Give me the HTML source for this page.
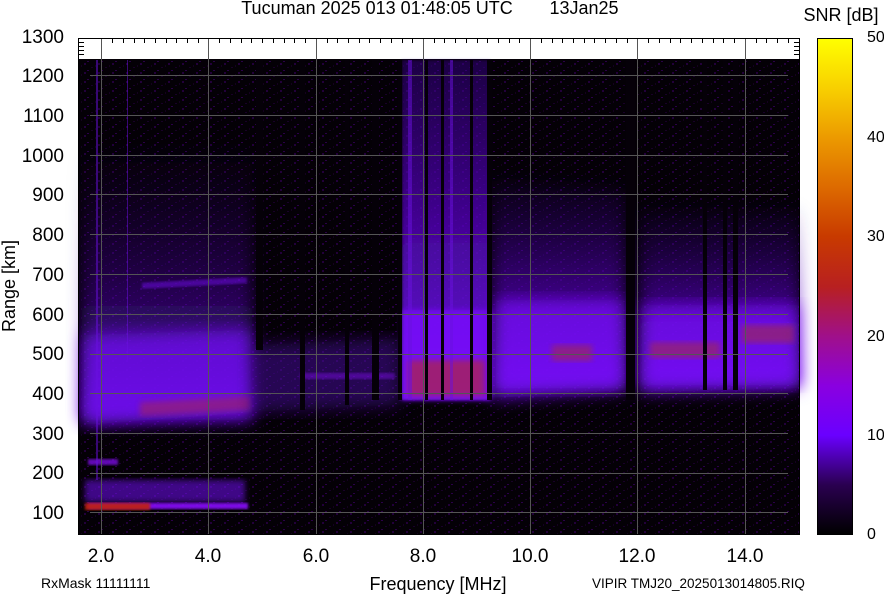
<!DOCTYPE html>
<html><head><meta charset="utf-8"><style>
html,body{margin:0;padding:0;background:#fff;width:884px;height:595px;overflow:hidden}
svg{display:block}
text{font-family:"Liberation Sans",Arial,sans-serif;fill:#000}
</style></head><body>
<svg width="884" height="595" viewBox="0 0 884 595" xmlns="http://www.w3.org/2000/svg">
<defs>
<filter id="b3"><feGaussianBlur stdDeviation="3"/></filter>
<filter id="b6"><feGaussianBlur stdDeviation="8"/></filter>
<filter id="b1"><feGaussianBlur stdDeviation="1.2"/></filter>
<linearGradient id="cb" x1="0" y1="1" x2="0" y2="0">
<stop offset="0" stop-color="#000"/>
<stop offset="0.1" stop-color="#2a0050"/>
<stop offset="0.2" stop-color="#6a00ff"/>
<stop offset="0.3" stop-color="#8a00e0"/>
<stop offset="0.4" stop-color="#a0108a"/>
<stop offset="0.5" stop-color="#b82020"/>
<stop offset="0.6" stop-color="#c83a00"/>
<stop offset="0.7" stop-color="#dd6a00"/>
<stop offset="0.8" stop-color="#ec9a00"/>
<stop offset="0.9" stop-color="#f8d000"/>
<stop offset="1" stop-color="#ffff00"/>
</linearGradient>
<linearGradient id="fog" x1="0" y1="1" x2="0" y2="0">
<stop offset="0" stop-color="#7010f0" stop-opacity="0.9"/>
<stop offset="0.35" stop-color="#5a10c8" stop-opacity="0.5"/>
<stop offset="1" stop-color="#30006a" stop-opacity="0"/>
</linearGradient>
<linearGradient id="col" x1="0" y1="1" x2="0" y2="0">
<stop offset="0" stop-color="#7010f0" stop-opacity="0.95"/>
<stop offset="0.5" stop-color="#5a08c8" stop-opacity="0.6"/>
<stop offset="1" stop-color="#3a0090" stop-opacity="0.1"/>
</linearGradient>
<linearGradient id="col2" x1="0" y1="1" x2="0" y2="0">
<stop offset="0" stop-color="#7010f0" stop-opacity="0.95"/>
<stop offset="0.5" stop-color="#5a08c8" stop-opacity="0.75"/>
<stop offset="1" stop-color="#3a0090" stop-opacity="0.45"/>
</linearGradient>
<pattern id="noise" width="14" height="9" patternUnits="userSpaceOnUse">
<rect width="14" height="9" fill="#040006"/>
<rect x="0" y="0" width="2" height="2" fill="#22003a"/>
<rect x="7" y="4" width="2" height="1" fill="#180028"/>
<rect x="3" y="7" width="2" height="1" fill="#2a0048"/>
<rect x="11" y="2" width="1" height="2" fill="#14001f"/>
</pattern>
</defs>

<text x="377" y="14" font-size="18" text-anchor="middle">Tucuman 2025 013 01:48:05 UTC</text>
<text x="584" y="14" font-size="18" text-anchor="middle">13Jan25</text>
<text x="841" y="21" font-size="18" text-anchor="middle">SNR [dB]</text>

<rect x="78" y="38" width="722" height="497" fill="#fff"/>
<rect x="78" y="59" width="722" height="476" fill="url(#noise)"/>

<g>
<rect x="82" y="140" width="170" height="280" fill="url(#fog)" filter="url(#b6)"/>
<polygon points="84,335 250,330 252,412 84,425" fill="#7010f0" opacity="0.75" filter="url(#b6)"/>
<polygon points="140,402 250,396 250,410 140,416" fill="#b02a30" opacity="0.45" filter="url(#b3)"/>
<rect x="142" y="280" width="105" height="6" fill="#7a10ff" opacity="0.45" filter="url(#b1)" transform="rotate(-3 195 283)"/>
<polygon points="252,345 400,338 400,405 252,412" fill="#4a08a0" opacity="0.5" filter="url(#b6)"/>
<rect x="300" y="373" width="95" height="6" fill="#8a10ff" opacity="0.4" filter="url(#b1)"/>
<rect x="402" y="60" width="88" height="340" fill="url(#col2)" filter="url(#b1)"/>
<rect x="402" y="310" width="90" height="90" fill="#7a10ff" opacity="0.8" filter="url(#b3)"/>
<rect x="408" y="360" width="78" height="36" fill="#b82a20" opacity="0.6" filter="url(#b3)"/>
<polygon points="492,180 625,190 625,390 492,398" fill="url(#col)" filter="url(#b6)"/>
<rect x="496" y="300" width="128" height="88" fill="#7a10ff" opacity="0.7" filter="url(#b6)"/>
<rect x="552" y="345" width="40" height="16" fill="#a02a50" opacity="0.6" filter="url(#b3)"/>
<polygon points="640,210 800,210 800,388 640,392" fill="url(#col)" filter="url(#b6)"/>
<rect x="642" y="305" width="156" height="80" fill="#7a10ff" opacity="0.7" filter="url(#b6)"/>
<rect x="650" y="342" width="70" height="16" fill="#a02a50" opacity="0.6" filter="url(#b3)"/>
<rect x="742" y="325" width="52" height="18" fill="#a02a50" opacity="0.6" filter="url(#b3)"/>
<rect x="88" y="459" width="30" height="6" fill="#8a10ff" opacity="0.7" filter="url(#b1)"/>
<rect x="85" y="480" width="160" height="22" fill="#7010f0" opacity="0.55" filter="url(#b3)"/>
<rect x="88" y="503" width="160" height="6" fill="#8a10ff" opacity="0.9" filter="url(#b1)"/>
<rect x="85" y="503" width="65" height="7" fill="#c02010" opacity="0.9" filter="url(#b1)"/>
<g fill="#050008">
<rect x="256" y="60" width="7" height="290"/>
<rect x="300" y="60" width="5" height="350"/>
<rect x="345" y="60" width="4" height="345"/>
<rect x="372" y="60" width="7" height="340"/>
<rect x="398" y="60" width="4" height="340"/>
<rect x="425" y="60" width="3" height="340"/>
<rect x="441" y="60" width="3" height="340"/>
<rect x="470" y="60" width="3" height="340"/>
<rect x="487" y="60" width="5" height="340"/>
<rect x="626" y="60" width="9" height="340"/>
<rect x="703" y="60" width="4" height="330"/>
<rect x="723" y="60" width="4" height="330"/>
<rect x="733" y="60" width="5" height="330"/>
</g>
<g fill="#6a10e0" opacity="0.5">
<rect x="96" y="60" width="2" height="420"/>
<rect x="127" y="60" width="1" height="300"/>
<rect x="408" y="60" width="4" height="340"/>
<rect x="450" y="60" width="3" height="340"/>
</g>
</g>

<g stroke="#555" stroke-width="1" fill="none">
<line x1="101.5" y1="38" x2="101.5" y2="535"/>
<line x1="208.5" y1="38" x2="208.5" y2="535"/>
<line x1="316.5" y1="38" x2="316.5" y2="535"/>
<line x1="423.5" y1="38" x2="423.5" y2="535"/>
<line x1="530.5" y1="38" x2="530.5" y2="535"/>
<line x1="637.5" y1="38" x2="637.5" y2="535"/>
<line x1="745.5" y1="38" x2="745.5" y2="535"/>
<line x1="90" y1="75.5" x2="788" y2="75.5"/>
<line x1="90" y1="115.5" x2="788" y2="115.5"/>
<line x1="90" y1="155.5" x2="788" y2="155.5"/>
<line x1="90" y1="194.5" x2="788" y2="194.5"/>
<line x1="90" y1="234.5" x2="788" y2="234.5"/>
<line x1="90" y1="274.5" x2="788" y2="274.5"/>
<line x1="90" y1="314.5" x2="788" y2="314.5"/>
<line x1="90" y1="354.5" x2="788" y2="354.5"/>
<line x1="90" y1="393.5" x2="788" y2="393.5"/>
<line x1="90" y1="433.5" x2="788" y2="433.5"/>
<line x1="90" y1="473.5" x2="788" y2="473.5"/>
<line x1="90" y1="512.5" x2="788" y2="512.5"/>
</g>
<g stroke="#000" stroke-width="1">
<path d="M112.5 38v5M123.5 38v5M134.5 38v5M144.5 38v5M155.5 38v5M166.5 38v5M176.5 38v5M187.5 38v5M198.5 38v5M219.5 38v5M230.5 38v5M241.5 38v5M251.5 38v5M262.5 38v5M273.5 38v5M284.5 38v5M294.5 38v5M305.5 38v5M327.5 38v5M337.5 38v5M348.5 38v5M359.5 38v5M369.5 38v5M380.5 38v5M391.5 38v5M402.5 38v5M412.5 38v5M434.5 38v5M444.5 38v5M455.5 38v5M466.5 38v5M477.5 38v5M487.5 38v5M498.5 38v5M509.5 38v5M519.5 38v5M541.5 38v5M552.5 38v5M562.5 38v5M573.5 38v5M584.5 38v5M594.5 38v5M605.5 38v5M616.5 38v5M627.5 38v5M648.5 38v5M659.5 38v5M670.5 38v5M680.5 38v5M691.5 38v5M702.5 38v5M713.5 38v5M723.5 38v5M734.5 38v5M756.5 38v5M766.5 38v5M777.5 38v5M788.5 38v5"/>
<path d="M78 42.5h6M78 46.5h6M78 50.5h6M78 54.5h6M794 42.5h6M794 46.5h6M794 50.5h6M794 54.5h6"/>
</g>
<rect x="78.5" y="38.5" width="721" height="496" fill="none" stroke="#000"/>

<g font-size="19" text-anchor="end">
<text x="64" y="43">1300</text>
<text x="64" y="82">1200</text>
<text x="64" y="122">1100</text>
<text x="64" y="162">1000</text>
<text x="64" y="201">900</text>
<text x="64" y="241">800</text>
<text x="64" y="281">700</text>
<text x="64" y="321">600</text>
<text x="64" y="360">500</text>
<text x="64" y="400">400</text>
<text x="64" y="440">300</text>
<text x="64" y="479">200</text>
<text x="64" y="519">100</text>
</g>
<text transform="translate(15 286) rotate(-90)" font-size="18" text-anchor="middle">Range [km]</text>

<g font-size="19" text-anchor="middle">
<text x="101" y="562">2.0</text>
<text x="208" y="562">4.0</text>
<text x="316" y="562">6.0</text>
<text x="423" y="562">8.0</text>
<text x="530" y="562">10.0</text>
<text x="637" y="562">12.0</text>
<text x="745" y="562">14.0</text>
</g>
<text x="438" y="590" font-size="18" text-anchor="middle">Frequency [MHz]</text>
<text x="41" y="588" font-size="14">RxMask 11111111</text>
<text x="592" y="588" font-size="13.5">VIPIR  TMJ20_2025013014805.RIQ</text>

<rect x="817.5" y="38.5" width="35" height="496" fill="url(#cb)" stroke="#000"/>
<g font-size="16">
<text x="867" y="42">50</text>
<text x="867" y="142">40</text>
<text x="867" y="241">30</text>
<text x="867" y="341">20</text>
<text x="867" y="440">10</text>
<text x="867" y="539">0</text>
</g>
</svg>
</body></html>
